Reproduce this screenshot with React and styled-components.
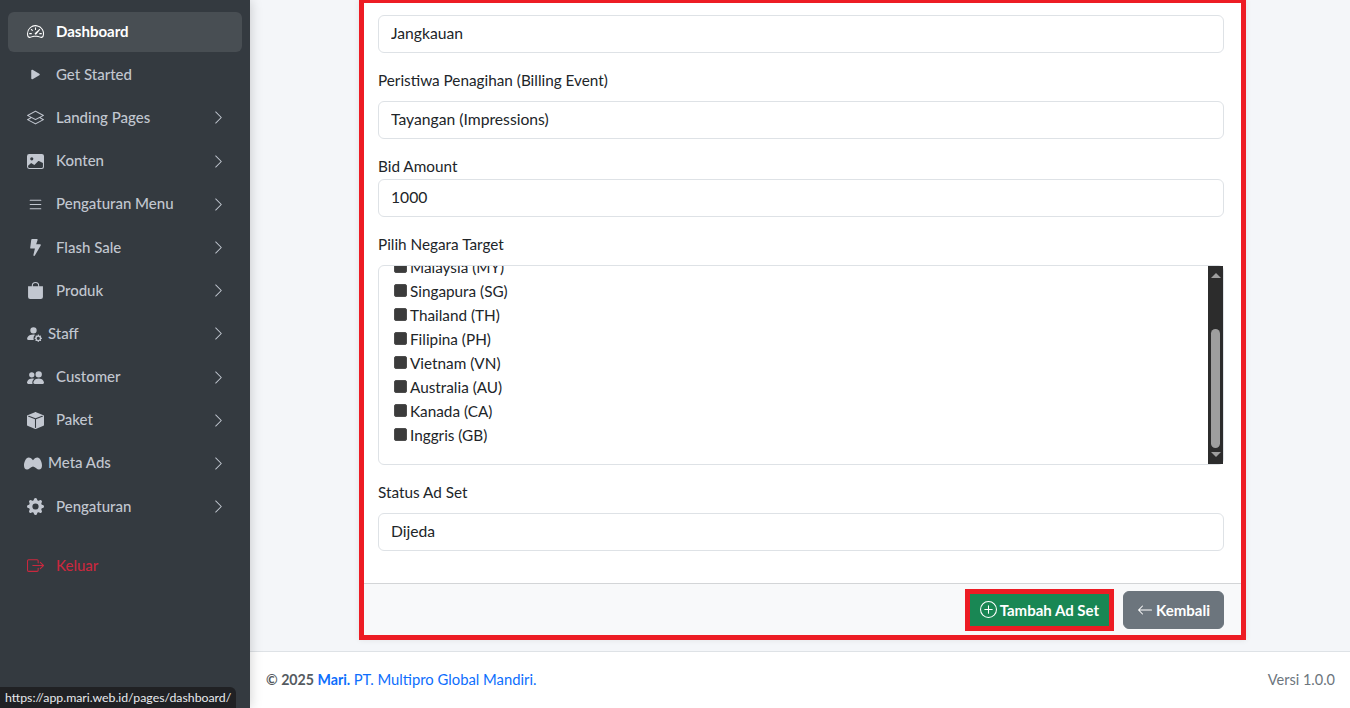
import React from 'react'
import styled, { createGlobalStyle } from 'styled-components'
import {
  BsSpeedometer2, BsPlayFill, BsLayers, BsImageFill, BsList,
  BsBagFill, BsPersonFillGear, BsPeopleFill, BsBoxFill, BsGearFill,
  BsBoxArrowRight, BsChevronRight, BsPlusCircle, BsArrowLeft,
} from 'react-icons/bs'
import { FaBolt } from 'react-icons/fa'

const GlobalStyle = createGlobalStyle`
  * { box-sizing: border-box; }
  html, body { margin: 0; height: 100%; overflow: hidden; }
  body { font-family: "Lato", "Noto Sans", sans-serif; font-size: 15.3px; color: #212529; }
`
const Layout = styled.div`
  display: flex;
  height: 708px;
  width: 1350px;
  position: relative;
  background: #f4f6f9;
`
const Sidebar = styled.aside`
  width: 250px;
  flex-shrink: 0;
  background: #343a40;
  padding: 11.6px 8px 12px;
  display: flex;
  flex-direction: column;
  gap: 3.2px;
  box-shadow: 0 0 12px rgba(0, 0, 0, .2);
  z-index: 1;
`
const NavItem = styled.a`
  display: flex;
  align-items: center;
  height: 40px;
  padding: 0 16px 0 ${p => (p.$tight ? '15px' : '19px')};
  border-radius: 6px;
  font-weight: ${p => (p.$active ? 700 : 500)};
  font-size: 15px;
  color: ${p => (p.$danger ? '#c9283e' : p.$active ? '#fff' : '#c2c7d0')};
  background: ${p => (p.$active ? 'rgba(255,255,255,.1)' : 'transparent')};
  margin-top: ${p => (p.$danger ? '16px' : '0')};
`
const NavIcon = styled.span`
  width: ${p => (p.$tight ? '20px' : '17px')};
  margin-right: ${p => (p.$tight ? '5px' : '12px')};
  display: flex;
  justify-content: center;
  font-size: 17px;
  flex-shrink: 0;
`
const NavLabel = styled.span`
  flex: 1;
  padding-bottom: 2px;
`
const Main = styled.div`
  flex: 1;
  min-width: 0;
  display: flex;
  flex-direction: column;
`
const Content = styled.main`
  flex: 1;
  min-height: 0;
  padding: 0 104px 11px 109px;
  display: flex;
`
const Card = styled.section`
  flex: 1;
  display: flex;
  flex-direction: column;
  background: #fff;
  border: 5px solid #ed1c24;
  border-top-width: 3px;
  box-shadow: 0 0 6px rgba(0, 0, 0, .08);
  min-width: 0;
`
const CardBody = styled.div`
  flex: 1;
  min-height: 0;
  overflow: hidden;
  padding: 0 17px 32px 14px;
  display: flex;
  flex-direction: column;
  justify-content: flex-end;
`
const Field = styled.div`
  margin-bottom: 16px;
  flex-shrink: 0;
  &:last-child { margin-bottom: 0; }
`
const Label = styled.label`
  display: block;
  height: 24px;
  line-height: 22px;
  margin-bottom: ${p => (p.$tight ? '0' : '8px')};
`
const Input = styled.input`
  display: block;
  width: 100%;
  height: 38px;
  padding: 5px 12px 8px;
  font: inherit;
  font-size: 15.7px;
  color: #212529;
  background: #fff;
  border: 1px solid #dee2e6;
  border-radius: 6px;
`
const ListBox = styled.div`
  height: 200px;
  display: flex;
  border: 1px solid #dee2e6;
  border-radius: 6px;
`
const ListViewport = styled.div`
  flex: 1;
  overflow: hidden;
  display: flex;
  flex-direction: column;
  justify-content: flex-end;
  padding: 0 15px 16px;
`
const CheckRow = styled.label`
  display: flex;
  align-items: center;
  gap: 3px;
  height: 24px;
  padding-bottom: 2px;
  line-height: 20px;
  flex-shrink: 0;
`
const Check = styled.input`
  appearance: none;
  width: 13px;
  height: 13px;
  margin: -2px 0 0;
  background: #3b3b3b;
  border: 1px solid #4d4d4d;
  border-radius: 2px;
`
const ScrollTrack = styled.div`
  width: 15px;
  background: #2c2c2c;
  display: flex;
  flex-direction: column;
  align-items: center;
  padding: 7px 0;
`
const Arrow = styled.span`
  width: 0;
  height: 0;
  border-left: 5px solid transparent;
  border-right: 5px solid transparent;
  ${p => (p.$down ? 'border-top: 5px solid #9e9e9e;' : 'border-bottom: 5px solid #9e9e9e;')}
`
const Thumb = styled.span`
  width: 9px;
  height: 119px;
  margin: auto 0 4px;
  background: #9e9e9e;
  border-radius: 5px;
`
const CardFooter = styled.div`
  height: 52px;
  flex-shrink: 0;
  background: #f8f9fa;
  border-top: 1px solid #d3d5d7;
  display: flex;
  align-items: center;
  justify-content: flex-end;
  gap: 9px;
  padding: 0 17px 0 16px;
`
const Button = styled.button`
  display: flex;
  align-items: center;
  gap: 3px;
  height: ${p => (p.$primary ? '42px' : '38px')};
  padding: ${p => (p.$primary ? '0 10px' : '0 13px')};
  font: inherit;
  font-size: 15px;
  font-weight: 700;
  color: #fff;
  background: ${p => (p.$primary ? '#198754' : '#6c757d')};
  border: ${p => (p.$primary ? '5px solid #ed1c24' : '1px solid #6c757d')};
  border-radius: ${p => (p.$primary ? '0' : '6px')};
`
const Footer = styled.footer`
  height: 57px;
  flex-shrink: 0;
  background: #fff;
  border-top: 1px solid #dee2e6;
  display: flex;
  align-items: center;
  justify-content: space-between;
  padding: 0 15px 2px 16px;
  color: #6c757d;
  font-size: 14.5px;
`
const Copyright = styled.span`
  font-weight: 700;
  font-size: 14.2px;
  color: #555b61;
`
const FooterLink = styled.a`
  color: #0d6efd;
  font-weight: ${p => (p.$bold ? 700 : 400)};
  font-size: ${p => (p.$bold ? '14.2px' : '14.8px')};
`
const StatusTip = styled.div`
  position: absolute;
  left: 0;
  bottom: 0;
  height: 21px;
  padding: 0 5px;
  display: flex;
  align-items: center;
  background: #202124;
  border-top-right-radius: 6px;
  color: #e8eaed;
  font-size: 12.3px;
  z-index: 2;
`

const MetaIcon = () => (
  <svg width="18" height="13" viewBox="0 0 18 13" fill="currentColor">
    <path d="M4.6 0.5C6.6 0.5 7.8 1.8 9 3.2 10.2 1.8 11.4 0.5 13.4 0.5 16 0.5 18 5 18 8.4 18 11 16.8 12.5 15 12.5 13 12.5 11.6 10.2 9 9.4 6.4 10.2 5 12.5 3 12.5 1.2 12.5 0 11 0 8.4 0 5 2 0.5 4.6 0.5Z" />
  </svg>
)

const navItems = [
  { label: 'Dashboard', icon: BsSpeedometer2, active: true },
  { label: 'Get Started', icon: BsPlayFill },
  { label: 'Landing Pages', icon: BsLayers, more: true },
  { label: 'Konten', icon: BsImageFill, more: true },
  { label: 'Pengaturan Menu', icon: BsList, more: true },
  { label: 'Flash Sale', icon: FaBolt, more: true },
  { label: 'Produk', icon: BsBagFill, more: true },
  { label: 'Staff', icon: BsPersonFillGear, more: true, tight: true },
  { label: 'Customer', icon: BsPeopleFill, more: true },
  { label: 'Paket', icon: BsBoxFill, more: true },
  { label: 'Meta Ads', icon: MetaIcon, more: true, tight: true },
  { label: 'Pengaturan', icon: BsGearFill, more: true },
]

const countries = [
  'Amerika Serikat (US)', 'Indonesia (ID)', 'Malaysia (MY)', 'Singapura (SG)', 'Thailand (TH)',
  'Filipina (PH)', 'Vietnam (VN)', 'Australia (AU)', 'Kanada (CA)', 'Inggris (GB)',
]

export default function App() {
  return (
    <Layout>
      <GlobalStyle />
      <Sidebar>
        {navItems.map(item => (
          <NavItem key={item.label} $active={item.active} $tight={item.tight}>
            <NavIcon $tight={item.tight}><item.icon /></NavIcon>
            <NavLabel>{item.label}</NavLabel>
            {item.more && <BsChevronRight size={15} />}
          </NavItem>
        ))}
        <NavItem $danger>
          <NavIcon><BsBoxArrowRight /></NavIcon>
          <NavLabel>Keluar</NavLabel>
        </NavItem>
      </Sidebar>
      <Main>
        <Content>
          <Card>
            <CardBody>
              <Field>
                <Label>Tujuan Optimasi</Label>
                <Input readOnly value="Jangkauan" />
              </Field>
              <Field>
                <Label>Peristiwa Penagihan (Billing Event)</Label>
                <Input readOnly value="Tayangan (Impressions)" />
              </Field>
              <Field>
                <Label $tight>Bid Amount</Label>
                <Input readOnly value="1000" />
              </Field>
              <Field>
                <Label>Pilih Negara Target</Label>
                <ListBox>
                  <ListViewport>
                    {countries.map(c => (
                      <CheckRow key={c}>
                        <Check type="checkbox" />
                        {c}
                      </CheckRow>
                    ))}
                  </ListViewport>
                  <ScrollTrack>
                    <Arrow />
                    <Thumb />
                    <Arrow $down />
                  </ScrollTrack>
                </ListBox>
              </Field>
              <Field>
                <Label>Status Ad Set</Label>
                <Input readOnly value="Dijeda" />
              </Field>
            </CardBody>
            <CardFooter>
              <Button $primary><BsPlusCircle size={17} />Tambah Ad Set</Button>
              <Button><BsArrowLeft size={16} />Kembali</Button>
            </CardFooter>
          </Card>
        </Content>
        <Footer>
          <Copyright>
            © 2025 <FooterLink $bold>Mari.</FooterLink> <FooterLink>PT. Multipro Global Mandiri.</FooterLink>
          </Copyright>
          <span>Versi 1.0.0</span>
        </Footer>
      </Main>
      <StatusTip>https://app.mari.web.id/pages/dashboard/</StatusTip>
    </Layout>
  )
}
